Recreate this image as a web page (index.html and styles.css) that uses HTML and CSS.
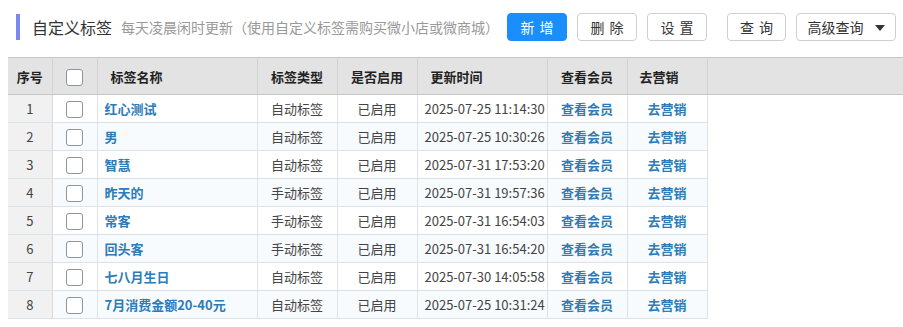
FILE: index.html
```html
<!DOCTYPE html>
<html lang="zh-CN">
<head>
    <meta charset="UTF-8">
    <title>自定义标签</title>
    <link rel="stylesheet" href="styles.css">
</head>
<body>
    <div class="page">
        <div class="toolbar">
            <div class="title-mark"></div>
            <h2 class="title">自定义标签</h2>
            <span class="subtitle">每天凌晨闲时更新（使用自定义标签需购买微小店或微商城）</span>
            <div class="actions">
                <button class="btn btn-primary">新 增</button>
                <button class="btn">删 除</button>
                <button class="btn">设 置</button>
                <button class="btn btn-query">查 询</button>
                <button class="btn btn-adv">高级查询 <span class="caret"></span></button>
            </div>
        </div>

        <table class="tag-table">
            <colgroup>
                <col class="col-no">
                <col class="col-check">
                <col class="col-name">
                <col class="col-type">
                <col class="col-state">
                <col class="col-time">
                <col class="col-view">
                <col class="col-market">
                <col>
            </colgroup>
            <thead>
                <tr>
                    <th>序号</th>
                    <th><span class="checkbox"></span></th>
                    <th class="th-left">标签名称</th>
                    <th>标签类型</th>
                    <th>是否启用</th>
                    <th class="th-left">更新时间</th>
                    <th>查看会员</th>
                    <th class="th-market">去营销</th>
                    <th class="th-rest"></th>
                </tr>
            </thead>
            <tbody>
                <tr>
                    <td class="cell-no">1</td>
                    <td><span class="checkbox"></span></td>
                    <td class="cell-left"><a href="#">红心测试</a></td>
                    <td>自动标签</td>
                    <td>已启用</td>
                    <td class="cell-left">2025-07-25 11:14:30</td>
                    <td><a href="#">查看会员</a></td>
                    <td><a href="#">去营销</a></td>
                </tr>
                <tr>
                    <td class="cell-no">2</td>
                    <td><span class="checkbox"></span></td>
                    <td class="cell-left"><a href="#">男</a></td>
                    <td>自动标签</td>
                    <td>已启用</td>
                    <td class="cell-left">2025-07-25 10:30:26</td>
                    <td><a href="#">查看会员</a></td>
                    <td><a href="#">去营销</a></td>
                </tr>
                <tr>
                    <td class="cell-no">3</td>
                    <td><span class="checkbox"></span></td>
                    <td class="cell-left"><a href="#">智慧</a></td>
                    <td>自动标签</td>
                    <td>已启用</td>
                    <td class="cell-left">2025-07-31 17:53:20</td>
                    <td><a href="#">查看会员</a></td>
                    <td><a href="#">去营销</a></td>
                </tr>
                <tr>
                    <td class="cell-no">4</td>
                    <td><span class="checkbox"></span></td>
                    <td class="cell-left"><a href="#">昨天的</a></td>
                    <td>手动标签</td>
                    <td>已启用</td>
                    <td class="cell-left">2025-07-31 19:57:36</td>
                    <td><a href="#">查看会员</a></td>
                    <td><a href="#">去营销</a></td>
                </tr>
                <tr>
                    <td class="cell-no">5</td>
                    <td><span class="checkbox"></span></td>
                    <td class="cell-left"><a href="#">常客</a></td>
                    <td>手动标签</td>
                    <td>已启用</td>
                    <td class="cell-left">2025-07-31 16:54:03</td>
                    <td><a href="#">查看会员</a></td>
                    <td><a href="#">去营销</a></td>
                </tr>
                <tr>
                    <td class="cell-no">6</td>
                    <td><span class="checkbox"></span></td>
                    <td class="cell-left"><a href="#">回头客</a></td>
                    <td>手动标签</td>
                    <td>已启用</td>
                    <td class="cell-left">2025-07-31 16:54:20</td>
                    <td><a href="#">查看会员</a></td>
                    <td><a href="#">去营销</a></td>
                </tr>
                <tr>
                    <td class="cell-no">7</td>
                    <td><span class="checkbox"></span></td>
                    <td class="cell-left"><a href="#">七八月生日</a></td>
                    <td>自动标签</td>
                    <td>已启用</td>
                    <td class="cell-left">2025-07-30 14:05:58</td>
                    <td><a href="#">查看会员</a></td>
                    <td><a href="#">去营销</a></td>
                </tr>
                <tr>
                    <td class="cell-no">8</td>
                    <td><span class="checkbox"></span></td>
                    <td class="cell-left"><a href="#">7月消费金额20-40元</a></td>
                    <td>自动标签</td>
                    <td>已启用</td>
                    <td class="cell-left">2025-07-25 10:31:24</td>
                    <td><a href="#">查看会员</a></td>
                    <td><a href="#">去营销</a></td>
                </tr>
            </tbody>
        </table>
    </div>
</body>
</html>
```

FILE: styles.css
```css
/* Page and toolbar */
body {
    margin: 0;
    padding: 0;
    background-color: #fff;
    color: #333;
    font-family: "Noto Sans CJK SC", "Noto Sans", sans-serif;
}

.page {
    padding: 13px 0 0 8px;
}

.toolbar {
    display: flex;
    align-items: center;
    height: 28px;
    margin-bottom: 16px;
    white-space: nowrap;
}

.toolbar > * {
    flex-shrink: 0;
}

.title-mark {
    width: 4px;
    height: 26px;
    margin-left: 8px;
    background-color: #7d86f5;
}

.title {
    margin: 0 0 0 12px;
    font-size: 16px;
    font-weight: normal;
    color: #333;
}

.subtitle {
    margin-left: 9px;
    font-size: 14px;
    color: #999;
}

.actions {
    display: flex;
    gap: 10px;
    margin-left: 8px;
}

.btn {
    height: 28px;
    width: 60px;
    padding: 0;
    border: 1px solid #cfcfcf;
    border-radius: 4px;
    background-color: #fff;
    color: #333;
    font-family: inherit;
    font-size: 14px;
    word-spacing: 2px;
    cursor: pointer;
}

.btn-primary {
    background-color: #1a8ffb;
    border-color: #1a8ffb;
    color: #fff;
}

.btn-query {
    width: 59px;
    margin-left: 10px;
}

.btn-adv {
    width: 100px;
    word-spacing: 0;
}

.caret {
    display: inline-block;
    margin-left: 8px;
    width: 0;
    height: 0;
    border-left: 5px solid transparent;
    border-right: 5px solid transparent;
    border-top: 6px solid #333;
    vertical-align: 2px;
}

/* Table */
.tag-table {
    width: 895px;
    border-collapse: collapse;
    table-layout: fixed;
    font-size: 13px;
}

.col-no { width: 44px; }
.col-check { width: 45px; }
.col-name { width: 160px; }
.col-type { width: 80px; }
.col-state { width: 80px; }
.col-time { width: 130px; }
.col-view { width: 80px; }
.col-market { width: 80px; }

.tag-table th {
    height: 36px;
    padding: 0;
    background-color: #e3e3e3;
    border-top: 1px solid #c6c6c6;
    border-bottom: 1px solid #c6c6c6;
    border-right: 1px solid #d2d2d2;
    color: #222;
    font-weight: bold;
    text-align: center;
}

.tag-table td {
    height: 27px;
    padding: 0;
    border-bottom: 1px solid #dde2e8;
    border-right: 1px solid #dde2e8;
    color: #444;
    text-align: center;
}

.tag-table tbody tr:nth-child(even) td {
    background-color: #f8fbfe;
}

.tag-table tbody tr td.cell-no {
    background-color: #f1f1f1;
    border-right-color: #d6d9dd;
}

.tag-table th.th-left {
    text-align: left;
    padding-left: 13px;
}

.tag-table th.th-market {
    padding-right: 16px;
}

.tag-table th.th-rest {
    border-right: none;
}

.tag-table td.cell-left {
    text-align: left;
    padding-left: 7px;
}

.tag-table a {
    color: #2d7cb8;
    font-weight: bold;
    text-decoration: none;
}

.checkbox {
    display: inline-block;
    width: 15px;
    height: 15px;
    border: 1px solid #8c949e;
    border-radius: 3px;
    background-color: #fff;
    vertical-align: middle;
}
```
